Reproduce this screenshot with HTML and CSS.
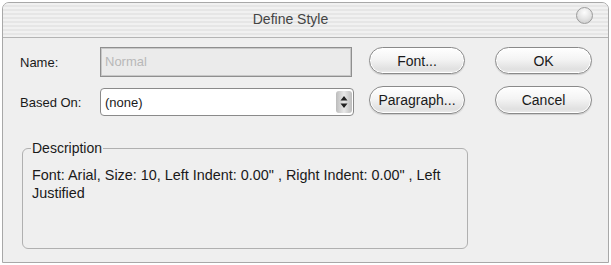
FILE: index.html
```html
<!DOCTYPE html>
<html lang="en">
<head>
  <meta charset="UTF-8" />
  <title>Define Style</title>
  <link rel="stylesheet" href="styles.css">
</head>
<body>
  <div class="window">
    <div class="titlebar">
      <span class="title">Define Style</span>
      <span class="close-btn"></span>
    </div>
    <div class="content">
      <div class="top">
        <div class="fields">
          <div class="row">
            <label class="label">Name:</label>
            <div class="input disabled">Normal</div>
          </div>
          <div class="row">
            <label class="label">Based On:</label>
            <div class="select">
              <span>(none)</span>
              <span class="spinner">
                <svg width="8" height="14" viewBox="0 0 8 14"><path d="M4 1 L7.5 5.5 H0.5 Z M4 13 L7.5 8.5 H0.5 Z" fill="#222"/></svg>
              </span>
            </div>
          </div>
        </div>
        <div class="buttons">
          <button class="pill">Font...</button>
          <button class="pill">OK</button>
          <button class="pill">Paragraph...</button>
          <button class="pill">Cancel</button>
        </div>
      </div>
      <fieldset class="group">
        <legend>Description</legend>
        <p>Font: Arial, Size: 10, Left Indent: 0.00" , Right Indent: 0.00" , Left Justified</p>
      </fieldset>
    </div>
  </div>
</body>
</html>
```

FILE: styles.css
```css
body { margin: 0; padding: 2px; background: #fff; font-family: "Liberation Sans", Arial, sans-serif; font-size: 13px; color: #1a1a1a; }
.window { width: 605px; height: 259px; border: 1px solid #a8a8a8; border-radius: 7px 7px 0 0; background: #efefef; overflow: hidden; }
.titlebar { position: relative; height: 34px; border-bottom: 1px solid #b4b4b4; display: flex; align-items: center; justify-content: center; background: repeating-linear-gradient(180deg, #f1f1f1 0, #f1f1f1 2px, #e6e6e6 2px, #e6e6e6 4px); }
.title { font-size: 14px; color: #444; margin-left: -30px; margin-top: -3px; }
.close-btn { position: absolute; right: 15px; top: 4px; width: 15px; height: 15px; border-radius: 50%; border: 1px solid #9a9a9a; background: radial-gradient(circle at 50% 30%, #fdfdfd 0, #e2e2e2 55%, #c4c4c4 100%); }
.content { padding: 9px 0 0 17px; }
.top { display: flex; }
.fields { display: flex; flex-direction: column; gap: 11px; }
.row { display: flex; align-items: center; }
.label { width: 80px; }
.input { height: 28px; border: 1px solid #8f8f8f; box-shadow: inset 0 0 0 1px #c8c8c8; line-height: 28px; padding-left: 4px; box-sizing: content-box; }
.input.disabled { background: #ebebeb; color: #b8b8b8; width: 246px; }
.select { height: 26px; border: 1px solid #8a8a8a; border-radius: 4px; background: #fff; display: flex; align-items: center; justify-content: space-between; padding-left: 4px; box-sizing: content-box; width: 248px; }
.spinner { width: 16px; height: 22px; margin-right: 1px; border-radius: 3px; background: linear-gradient(90deg, #bcbcbc, #e8e8e8 50%, #bcbcbc); display: flex; align-items: center; justify-content: center; }
.buttons { display: grid; grid-template-columns: 96px 97px; column-gap: 30px; row-gap: 10px; margin-left: 15px; }
.pill { height: 27px; font-family: inherit; font-size: 14px; color: #1a1a1a; border: 1px solid #8a8a8a; border-radius: 14px; background: linear-gradient(180deg, #ffffff 0, #f4f4f4 45%, #e0e0e0 85%, #ececec 100%); box-shadow: 0 1px 1px rgba(0,0,0,0.15), inset 0 0 0 1px #fff; padding: 0; }
.pill:nth-child(n+3) { height: 28px; }
.group { margin: 24px 0 0 2px; width: 426px; height: 97px; border: 1px solid #b0b0b0; border-radius: 6px; padding: 10px 9px 0 9px; font-size: 14px; }
.group legend { padding: 0 1px; margin-left: -1px; color: #1a1a1a; }
.group p { margin: 0; line-height: 18px; width: 424px; font-size: 14.4px; }
```
